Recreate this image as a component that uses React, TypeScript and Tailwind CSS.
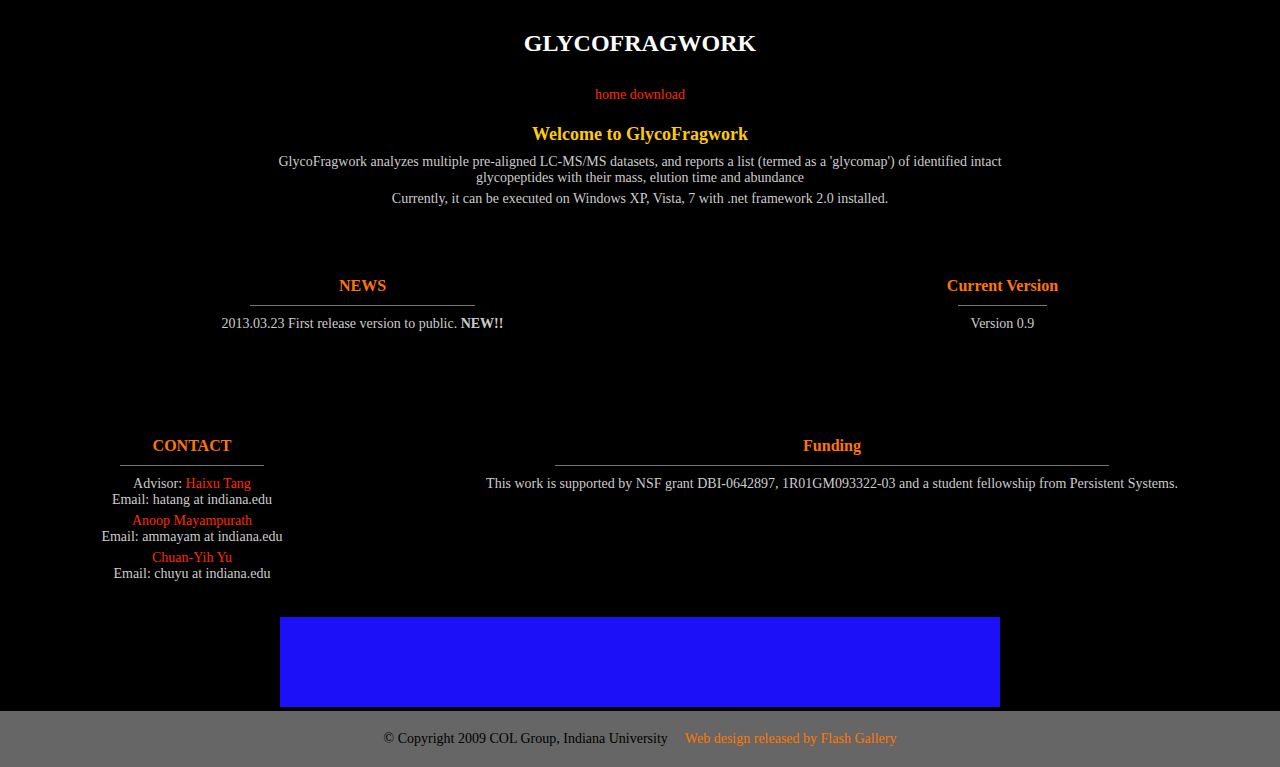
export default function App() {
    return (
        <div className="min-h-[767px] bg-black text-[14px] leading-[16px] text-[#cccccc] font-['Liberation_Serif',serif] flex flex-col">
            {/* Header */}
            <h1 className="mt-[29px] text-center text-[24px] leading-[28px] font-bold text-white">GLYCOFRAGWORK</h1>

            <nav className="mt-[30px] text-center text-[#ff2a00]">
                <a href="#">home</a> <a href="#">download</a>
            </nav>

            {/* Welcome */}
            <div className="mx-auto w-[760px] text-center mt-[21px]">
                <h2 className="text-[18px] leading-[21px] font-bold text-[#ffcc00]">Welcome to GlycoFragwork</h2>
                <p className="mt-[9px]">
                    GlycoFragwork analyzes multiple pre-aligned LC-MS/MS datasets, and reports a list (termed as a 'glycomap') of identified intact glycopeptides with their mass, elution time and abundance
                </p>
                <p className="mt-[5px]">Currently, it can be executed on Windows XP, Vista, 7 with .net framework 2.0 installed.</p>
            </div>

            {/* News / Version */}
            <div className="flex mt-[70px]">
                <div className="w-[725px] flex justify-center">
                    <Section title="NEWS">
                        <p>2013.03.23 First release version to public. <b>NEW!!</b></p>
                    </Section>
                </div>
                <div className="flex-1 flex justify-center">
                    <Section title="Current Version">
                        <p>Version 0.9</p>
                    </Section>
                </div>
            </div>

            {/* Contact / Funding */}
            <div className="flex mt-[105px]">
                <div className="w-[384px] flex justify-center">
                    <Section title="CONTACT">
                        <p>Advisor: <a href="#" className="text-[#ff2a00]">Haixu Tang</a></p>
                        <p>Email: hatang at indiana.edu</p>
                        <p className="mt-[5px]"><a href="#" className="text-[#ff2a00]">Anoop Mayampurath</a></p>
                        <p>Email: ammayam at indiana.edu</p>
                        <p className="mt-[5px]"><a href="#" className="text-[#ff2a00]">Chuan-Yih Yu</a></p>
                        <p>Email: chuyu at indiana.edu</p>
                    </Section>
                </div>
                <div className="flex-1 flex justify-center">
                    <Section title="Funding">
                        <p>This work is supported by NSF grant DBI-0642897, 1R01GM093322-03 and a student fellowship from Persistent Systems.</p>
                    </Section>
                </div>
            </div>

            {/* Banner */}
            <div className="mx-auto mt-[35px] w-[720px] h-[90px] bg-[#1c10f8]" />

            {/* Footer */}
            <footer className="mt-[4px] h-[56px] bg-[#666666] flex items-center justify-center text-black">
                <span>© Copyright 2009 COL Group, Indiana University</span>
                <a href="#" className="ml-[17px] text-[#ff7700]">Web design released by Flash Gallery</a>
            </footer>
        </div>
    )
}

function Section({ title, children }: { title: string; children: React.ReactNode }) {
    return (
        <div className="inline-flex flex-col items-center text-center">
            <h3 className="text-[16px] leading-[18px] font-bold text-[#ff7700]">{title}</h3>
            <hr className="w-4/5 mt-[10px] mb-[10px] border-0 border-t border-[#777777]" />
            <div>{children}</div>
        </div>
    )
}
